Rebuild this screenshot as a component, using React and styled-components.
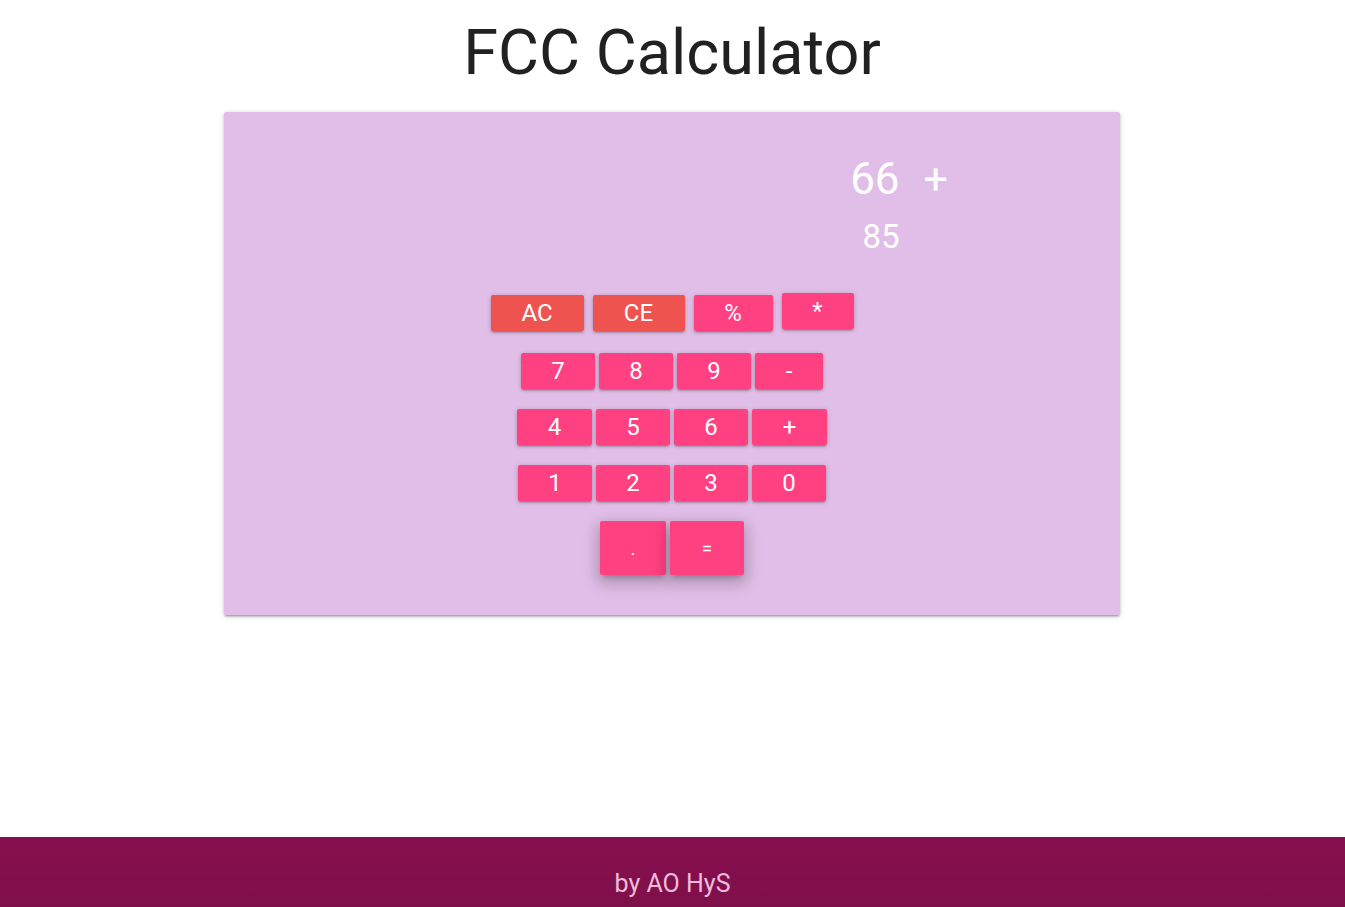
import React from "react";
import styled, { createGlobalStyle } from "styled-components";

const Global = createGlobalStyle`
  html, body { margin: 0; padding: 0; }
  body {
    font-family: Roboto, "Noto Sans", sans-serif;
    background: #ffffff;
    color: rgba(0,0,0,0.87);
  }
`;

const Page = styled.div`
  min-height: 100vh;
  display: flex;
  flex-direction: column;
`;

const Main = styled.main`
  flex: 1;
  display: flex;
  flex-direction: column;
  align-items: center;
  padding-right: 1px;
`;

const Title = styled.h1`
  margin: 18px 0 25px;
  font-size: 63px;
  line-height: 69px;
  font-weight: 400;
  color: #212121;
  text-align: center;
`;

const Card = styled.section`
  width: 896px;
  box-sizing: border-box;
  background: #e1bee7;
  border-radius: 2px;
  box-shadow: 0 2px 2px 0 rgba(0,0,0,0.14), 0 3px 1px -2px rgba(0,0,0,0.12), 0 1px 5px 0 rgba(0,0,0,0.2);
  padding: 42px 0 40px;
  display: flex;
  flex-direction: column;
`;

const Display = styled.div`
  display: grid;
  grid-template-columns: auto auto;
  column-gap: 24px;
  justify-content: end;
  padding-right: 172px;
  color: #ffffff;
  margin-bottom: 37px;
`;

const Current = styled.div`
  font-size: 44px;
  line-height: 50px;
  text-align: right;
`;

const Operator = styled.div`
  font-size: 43px;
  line-height: 50px;
`;

const Entry = styled.div`
  font-size: 33px;
  line-height: 38px;
  margin-top: 14px;
  text-align: right;
`;

const Pad = styled.div`
  display: flex;
  flex-direction: column;
  align-items: center;
  gap: 20px;
`;

const Row = styled.div`
  display: flex;
  justify-content: center;
  align-items: flex-end;
  gap: ${(p) => p.$gap}px;
  margin-bottom: ${(p) => p.$after || 0}px;
`;

const Key = styled.button`
  width: ${(p) => p.$w}px;
  height: ${(p) => (p.$large ? 54 : 36)}px;
  margin-bottom: ${(p) => p.$lift || 0}px;
  border: none;
  border-radius: 2px;
  padding: 0;
  background: ${(p) => (p.$danger ? "#ef5350" : "#ff4081")};
  color: #ffffff;
  font-family: Roboto, "Noto Sans", sans-serif;
  font-size: ${(p) => (p.$large ? 19 : 24)}px;
  line-height: 1;
  display: flex;
  align-items: center;
  justify-content: center;
  cursor: pointer;
  box-shadow: ${(p) =>
    p.$large
      ? "0 8px 17px 2px rgba(0,0,0,0.14), 0 3px 14px 2px rgba(0,0,0,0.12), 0 5px 5px -3px rgba(0,0,0,0.2)"
      : "0 2px 2px 0 rgba(0,0,0,0.14), 0 3px 1px -2px rgba(0,0,0,0.12), 0 1px 5px 0 rgba(0,0,0,0.2)"};
`;

const Footer = styled.footer`
  height: 70px;
  background: linear-gradient(#880e4f, #7e1049);
  display: flex;
  align-items: center;
  justify-content: center;
  color: #eebcd9;
  font-size: 25px;
  padding-top: 22px;
  box-sizing: border-box;
`;

const rows = [
  {
    gap: 9,
    after: 2,
    keys: [
      { l: "AC", w: 93, danger: true },
      { l: "CE", w: 92, danger: true },
      { l: "%", w: 79 },
      { l: "*", w: 72, lift: 2 },
    ],
  },
  {
    gap: 4,
    keys: [
      { l: "7", w: 74 },
      { l: "8", w: 74 },
      { l: "9", w: 74 },
      { l: "-", w: 68 },
    ],
  },
  {
    gap: 4,
    keys: [
      { l: "4", w: 75 },
      { l: "5", w: 74 },
      { l: "6", w: 74 },
      { l: "+", w: 75 },
    ],
  },
  {
    gap: 4,
    keys: [
      { l: "1", w: 74 },
      { l: "2", w: 74 },
      { l: "3", w: 74 },
      { l: "0", w: 74 },
    ],
  },
  {
    gap: 4,
    keys: [
      { l: ".", w: 66, large: true },
      { l: "=", w: 74, large: true },
    ],
  },
];

export default function App() {
  return (
    <Page>
      <Global />
      <Main>
        <Title>FCC Calculator</Title>
        <Card>
          <Display>
            <Current>66</Current>
            <Operator>+</Operator>
            <Entry>85</Entry>
          </Display>
          <Pad>
            {rows.map((r, i) => (
              <Row key={i} $gap={r.gap} $after={r.after}>
                {r.keys.map((k) => (
                  <Key
                    key={k.l}
                    $w={k.w}
                    $danger={k.danger}
                    $large={k.large}
                    $lift={k.lift}
                  >
                    {k.l}
                  </Key>
                ))}
              </Row>
            ))}
          </Pad>
        </Card>
      </Main>
      <Footer>by AO HyS</Footer>
    </Page>
  );
}
